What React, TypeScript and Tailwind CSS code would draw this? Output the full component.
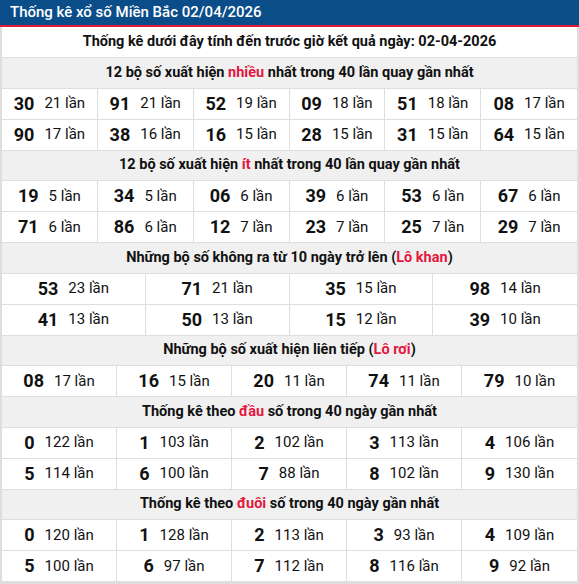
import React from "react";

type Item = { num: string; count: number };

const toItems = (list: [string, number][]): Item[] =>
  list.map(([num, count]) => ({ num, count }));

const sections: {
  title: React.ReactNode;
  cols: number;
  rows: Item[][];
}[] = [
  {
    title: (
      <>
        12 bộ số xuất hiện <span className="text-[#e4173e]">nhiều</span> nhất
        trong 40 lần quay gần nhất
      </>
    ),
    cols: 6,
    rows: [
      toItems([["30", 21], ["91", 21], ["52", 19], ["09", 18], ["51", 18], ["08", 17]]),
      toItems([["90", 17], ["38", 16], ["16", 15], ["28", 15], ["31", 15], ["64", 15]]),
    ],
  },
  {
    title: (
      <>
        12 bộ số xuất hiện <span className="text-[#e4173e]">ít</span> nhất
        trong 40 lần quay gần nhất
      </>
    ),
    cols: 6,
    rows: [
      toItems([["19", 5], ["34", 5], ["06", 6], ["39", 6], ["53", 6], ["67", 6]]),
      toItems([["71", 6], ["86", 6], ["12", 7], ["23", 7], ["25", 7], ["29", 7]]),
    ],
  },
  {
    title: (
      <>
        Những bộ số không ra từ 10 ngày trở lên (
        <span className="text-[#e4173e]">Lô khan</span>)
      </>
    ),
    cols: 4,
    rows: [
      toItems([["53", 23], ["71", 21], ["35", 15], ["98", 14]]),
      toItems([["41", 13], ["50", 13], ["15", 12], ["39", 10]]),
    ],
  },
  {
    title: (
      <>
        Những bộ số xuất hiện liên tiếp (
        <span className="text-[#e4173e]">Lô rơi</span>)
      </>
    ),
    cols: 5,
    rows: [toItems([["08", 17], ["16", 15], ["20", 11], ["74", 11], ["79", 10]])],
  },
  {
    title: (
      <>
        Thống kê theo <span className="text-[#e4173e]">đầu</span> số trong 40
        ngày gần nhất
      </>
    ),
    cols: 5,
    rows: [
      toItems([["0", 122], ["1", 103], ["2", 102], ["3", 113], ["4", 106]]),
      toItems([["5", 114], ["6", 100], ["7", 88], ["8", 102], ["9", 130]]),
    ],
  },
  {
    title: (
      <>
        Thống kê theo <span className="text-[#e4173e]">đuôi</span> số trong 40
        ngày gần nhất
      </>
    ),
    cols: 5,
    rows: [
      toItems([["0", 120], ["1", 128], ["2", 113], ["3", 93], ["4", 109]]),
      toItems([["5", 100], ["6", 97], ["7", 112], ["8", 116], ["9", 92]]),
    ],
  },
];

const gridCols: { [key: number]: string } = {
  4: "grid-cols-4",
  5: "grid-cols-5",
  6: "grid-cols-6",
};

const Cell = ({ item, last }: { item: Item; last: boolean }) => (
  <div
    className={`flex h-[30px] items-center justify-center gap-[10px] ${
      last ? "" : "border-r border-[#dedede]"
    }`}
  >
    <b className="text-[18px] font-bold leading-none">{item.num}</b>
    <span className="text-[15px] leading-none">{item.count} lần</span>
  </div>
);

const App = () => {
  return (
    <div
      className="w-[579px] bg-white text-[#111]"
      style={{ fontFamily: "Roboto, 'Liberation Sans', sans-serif" }}
    >
      <div className="flex h-[25px] items-center bg-[#0b4d89] px-[10px] text-[15px] font-medium text-white">
        Thống kê xổ số Miền Bắc 02/04/2026
      </div>
      <div className="h-[2px] bg-[#e31b3b]" />
      <div className="border-x-2 border-b-2 border-[#dedede]">
        <div className="flex h-[31px] items-center justify-center border-b border-[#dedede] text-[14.5px] font-bold">
          <span>Thống kê dưới đây tính đến trước giờ kết quả ngày: 02-04-2026</span>
        </div>
        {sections.map((section, si) => (
          <section key={si}>
            <h3 className="flex h-[30.5px] items-center justify-center border-b border-[#dedede] bg-[#f0f0f0] text-[14.5px] font-bold">
              <span>{section.title}</span>
            </h3>
            {section.rows.map((row, ri) => (
              <div
                key={ri}
                className={`grid ${gridCols[section.cols]} border-b border-[#dedede]`}
              >
                {row.map((item, ci) => (
                  <Cell key={ci} item={item} last={ci === row.length - 1} />
                ))}
              </div>
            ))}
          </section>
        ))}
      </div>
    </div>
  );
};

export default App;
